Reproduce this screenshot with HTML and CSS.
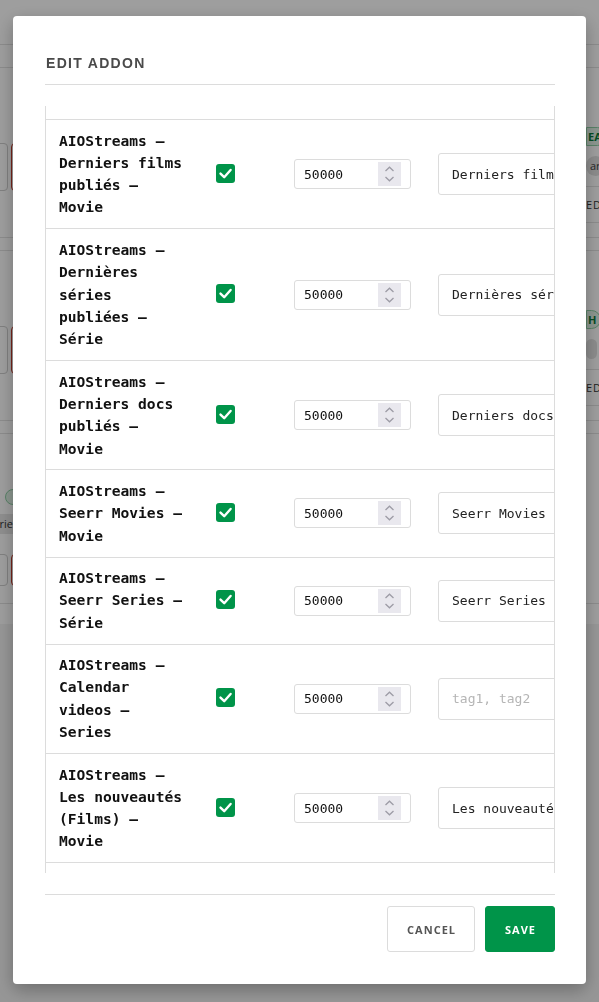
FILE: index.html
```html
<!DOCTYPE html>
<html lang="en">
<head>
    <meta charset="UTF-8">
    <meta name="viewport" content="width=device-width, initial-scale=1.0">
    <title>Edit Addon</title>
    <link rel="stylesheet" href="styles.css">
</head>
<body>
    <!-- Page underneath the dialog -->
    <div class="page">
        <div class="topbar"></div>
        <div class="subbar"></div>

        <section class="addon-card">
            <div class="card-actions">
                <span class="btn-ghost"></span>
                <span class="btn-danger"></span>
            </div>
            <div class="card-meta">
                <span class="badge">EA</span>
                <span class="pill">ar</span>
                <div class="meta-line">ED</div>
            </div>
        </section>

        <section class="addon-card">
            <div class="card-actions">
                <span class="btn-ghost"></span>
                <span class="btn-danger"></span>
            </div>
            <div class="card-meta">
                <span class="badge">H</span>
                <span class="pill">&nbsp;</span>
                <div class="meta-line">ED</div>
            </div>
        </section>

        <section class="addon-card short">
            <span class="dot"></span>
            <div class="tag-bar">rie</div>
            <div class="card-actions small">
                <span class="btn-ghost"></span>
                <span class="btn-danger"></span>
            </div>
        </section>

        <div class="page-rest"></div>
    </div>

    <!-- Edit addon dialog -->
    <div class="overlay">
        <div class="modal">
            <div class="modal-header">
                <h2>EDIT ADDON</h2>
            </div>

            <div class="catalog-scroll">
                <div class="catalog-list">
                    <div class="catalog-row">
                        <div class="cell-name">AIOStreams — Derniers films publiés — Movie</div>
                        <div class="cell-check"><span class="checkbox"><svg viewBox="0 0 19 19" width="19" height="19"><path d="M4.5 9.6 L8.2 13.2 L14.6 6" /></svg></span></div>
                        <div class="cell-num"><div class="number-input"><span>50000</span><span class="spin"><svg viewBox="0 0 23 24" width="23" height="24"><path d="M7.5 9 L11.5 5.2 L15.5 9 M7.5 15 L11.5 18.8 L15.5 15" /></svg></span></div></div>
                        <div class="cell-text"><input type="text" value="Derniers films publiés" placeholder="tag1, tag2"></div>
                    </div>
                    <div class="catalog-row">
                        <div class="cell-name">AIOStreams — Dernières séries publiées — Série</div>
                        <div class="cell-check"><span class="checkbox"><svg viewBox="0 0 19 19" width="19" height="19"><path d="M4.5 9.6 L8.2 13.2 L14.6 6" /></svg></span></div>
                        <div class="cell-num"><div class="number-input"><span>50000</span><span class="spin"><svg viewBox="0 0 23 24" width="23" height="24"><path d="M7.5 9 L11.5 5.2 L15.5 9 M7.5 15 L11.5 18.8 L15.5 15" /></svg></span></div></div>
                        <div class="cell-text"><input type="text" value="Dernières séries publiées" placeholder="tag1, tag2"></div>
                    </div>
                    <div class="catalog-row">
                        <div class="cell-name">AIOStreams — Derniers docs publiés — Movie</div>
                        <div class="cell-check"><span class="checkbox"><svg viewBox="0 0 19 19" width="19" height="19"><path d="M4.5 9.6 L8.2 13.2 L14.6 6" /></svg></span></div>
                        <div class="cell-num"><div class="number-input"><span>50000</span><span class="spin"><svg viewBox="0 0 23 24" width="23" height="24"><path d="M7.5 9 L11.5 5.2 L15.5 9 M7.5 15 L11.5 18.8 L15.5 15" /></svg></span></div></div>
                        <div class="cell-text"><input type="text" value="Derniers docs publiés" placeholder="tag1, tag2"></div>
                    </div>
                    <div class="catalog-row">
                        <div class="cell-name">AIOStreams — Seerr Movies — Movie</div>
                        <div class="cell-check"><span class="checkbox"><svg viewBox="0 0 19 19" width="19" height="19"><path d="M4.5 9.6 L8.2 13.2 L14.6 6" /></svg></span></div>
                        <div class="cell-num"><div class="number-input"><span>50000</span><span class="spin"><svg viewBox="0 0 23 24" width="23" height="24"><path d="M7.5 9 L11.5 5.2 L15.5 9 M7.5 15 L11.5 18.8 L15.5 15" /></svg></span></div></div>
                        <div class="cell-text"><input type="text" value="Seerr Movies" placeholder="tag1, tag2"></div>
                    </div>
                    <div class="catalog-row">
                        <div class="cell-name">AIOStreams — Seerr Series — Série</div>
                        <div class="cell-check"><span class="checkbox"><svg viewBox="0 0 19 19" width="19" height="19"><path d="M4.5 9.6 L8.2 13.2 L14.6 6" /></svg></span></div>
                        <div class="cell-num"><div class="number-input"><span>50000</span><span class="spin"><svg viewBox="0 0 23 24" width="23" height="24"><path d="M7.5 9 L11.5 5.2 L15.5 9 M7.5 15 L11.5 18.8 L15.5 15" /></svg></span></div></div>
                        <div class="cell-text"><input type="text" value="Seerr Series" placeholder="tag1, tag2"></div>
                    </div>
                    <div class="catalog-row">
                        <div class="cell-name">AIOStreams — Calendar videos — Series</div>
                        <div class="cell-check"><span class="checkbox"><svg viewBox="0 0 19 19" width="19" height="19"><path d="M4.5 9.6 L8.2 13.2 L14.6 6" /></svg></span></div>
                        <div class="cell-num"><div class="number-input"><span>50000</span><span class="spin"><svg viewBox="0 0 23 24" width="23" height="24"><path d="M7.5 9 L11.5 5.2 L15.5 9 M7.5 15 L11.5 18.8 L15.5 15" /></svg></span></div></div>
                        <div class="cell-text"><input type="text" value="" placeholder="tag1, tag2"></div>
                    </div>
                    <div class="catalog-row">
                        <div class="cell-name">AIOStreams — Les nouveautés (Films) — Movie</div>
                        <div class="cell-check"><span class="checkbox"><svg viewBox="0 0 19 19" width="19" height="19"><path d="M4.5 9.6 L8.2 13.2 L14.6 6" /></svg></span></div>
                        <div class="cell-num"><div class="number-input"><span>50000</span><span class="spin"><svg viewBox="0 0 23 24" width="23" height="24"><path d="M7.5 9 L11.5 5.2 L15.5 9 M7.5 15 L11.5 18.8 L15.5 15" /></svg></span></div></div>
                        <div class="cell-text"><input type="text" value="Les nouveautés (Films)" placeholder="tag1, tag2"></div>
                    </div>
                    <div class="catalog-row">
                        <div class="cell-name">AIOStreams — Les nouveautés (Séries) — Series</div>
                        <div class="cell-check"><span class="checkbox"><svg viewBox="0 0 19 19" width="19" height="19"><path d="M4.5 9.6 L8.2 13.2 L14.6 6" /></svg></span></div>
                        <div class="cell-num"><div class="number-input"><span>50000</span><span class="spin"><svg viewBox="0 0 23 24" width="23" height="24"><path d="M7.5 9 L11.5 5.2 L15.5 9 M7.5 15 L11.5 18.8 L15.5 15" /></svg></span></div></div>
                        <div class="cell-text"><input type="text" value="Les nouveautés (Séries)" placeholder="tag1, tag2"></div>
                    </div>
                </div>
            </div>

            <div class="modal-footer">
                <button class="btn-cancel">CANCEL</button>
                <button class="btn-save">SAVE</button>
            </div>
        </div>
    </div>
</body>
</html>
```

FILE: styles.css
```css
body {
    margin: 0;
    height: 1002px;
    overflow: hidden;
    font-family: "Open Sans", Arial, sans-serif;
    background-color: #fff;
}

/* ---------- page behind the dialog ---------- */

.page {
    width: 599px;
    background-color: #fff;
}

.topbar {
    height: 44px;
    border-bottom: 1px solid #e2e2e2;
}

.subbar {
    height: 22px;
    border-bottom: 1px solid #e2e2e2;
}

.addon-card {
    display: flex;
    justify-content: space-between;
    height: 169px;
    border-top: 1px solid #e2e2e2;
    border-bottom: 1px solid #e2e2e2;
    margin-bottom: 12px;
}

.addon-card:first-of-type {
    border-top: none;
}

.card-actions {
    display: flex;
    gap: 3px;
    align-self: flex-end;
    margin-left: -30px;
    padding-bottom: 46px;
}

.btn-ghost,
.btn-danger {
    width: 38px;
    height: 48px;
    border-radius: 4px;
    border: 1px solid #cfcfcf;
    box-sizing: border-box;
}

.btn-danger {
    border-color: #c0392b;
}

.card-meta {
    width: 13px;
    overflow: hidden;
    display: flex;
    flex-direction: column;
    align-items: flex-start;
    align-self: flex-end;
    gap: 10px;
    padding-bottom: 14px;
    white-space: nowrap;
}

.badge {
    font-size: 11px;
    line-height: 15px;
    font-weight: 700;
    color: #0a7a3a;
    background-color: #e2f4e8;
    border: 1px solid #8fd1a6;
    border-radius: 0 10px 10px 0;
    padding: 1px 4px 1px 1px;
}

.pill {
    font-size: 11px;
    line-height: 14px;
    color: #444;
    background-color: #e2e2e2;
    border-radius: 10px;
    padding: 3px 4px;
}

.meta-line {
    align-self: stretch;
    border-top: 1px solid #e2e2e2;
    border-bottom: 1px solid #e2e2e2;
    padding: 10px 0;
    font-size: 11px;
    line-height: 15px;
    letter-spacing: 1px;
    color: #333;
}

.addon-card.short {
    display: block;
    box-sizing: border-box;
    height: 171px;
    padding-top: 55px;
    margin-bottom: 20px;
}

.dot {
    display: block;
    width: 16px;
    height: 16px;
    border-radius: 50%;
    background-color: #e2f4e8;
    border: 1px solid #8fd1a6;
    box-sizing: border-box;
    margin-left: 5px;
}

.tag-bar {
    width: 13px;
    overflow: hidden;
    direction: rtl;
    margin-top: 9px;
    font-size: 11px;
    line-height: 20px;
    color: #333;
    background-color: #e6e6e6;
}

.card-actions.small {
    align-self: auto;
    margin-top: 20px;
    padding-bottom: 0;
}

.card-actions.small span {
    height: 32px;
}

.page-rest {
    height: 400px;
    background-color: #f3f3f3;
}

/* ---------- dialog ---------- */

.overlay {
    position: fixed;
    top: 0;
    left: 0;
    right: 0;
    bottom: 0;
    background-color: rgba(0, 0, 0, 0.38);
    display: flex;
    justify-content: center;
    align-items: flex-start;
    padding-top: 16px;
}

.modal {
    width: 573px;
    box-sizing: border-box;
    background-color: #fff;
    border-radius: 4px;
    padding: 32px 31px 32px 32px;
    box-shadow: 0 6px 18px rgba(0, 0, 0, 0.28);
}

.modal-header {
    padding: 5px 0 11px;
    border-bottom: 1px solid #dcdcdc;
}

.modal-header h2 {
    margin: 0 0 0 1px;
    font-family: "Liberation Sans", Arial, sans-serif;
    font-size: 14px;
    line-height: 20px;
    font-weight: 700;
    letter-spacing: 1.3px;
    color: #4a4a4a;
}

.catalog-scroll {
    margin-top: 21px;
    height: 767px;
    overflow: hidden;
    border-left: 1px solid #dcdcdc;
    border-right: 1px solid #dcdcdc;
    padding-top: 13px;
    box-sizing: border-box;
}

.catalog-list {
    width: 613px;
    border-top: 1px solid #dcdcdc;
}

.catalog-row {
    display: grid;
    grid-template-columns: 157px 78px 144px 220px;
    align-items: center;
    padding: 9.6px 0 9.6px 13px;
    border-bottom: 1px solid #dcdcdc;
}

.cell-name {
    padding-right: 29px;
    font-family: "DejaVu Sans Mono", monospace;
    font-weight: 700;
    font-size: 14.6px;
    line-height: 22.3px;
    color: #111;
}

.checkbox {
    display: block;
    width: 19px;
    height: 19px;
    margin-top: -2px;
    border-radius: 3px;
    background-color: #009449;
}

.checkbox svg {
    display: block;
    fill: none;
    stroke: #fff;
    stroke-width: 2.4;
    stroke-linecap: round;
    stroke-linejoin: round;
}

.number-input {
    width: 117px;
    height: 30px;
    box-sizing: border-box;
    border: 1px solid #dcdcdc;
    border-radius: 3px;
    display: flex;
    align-items: center;
    justify-content: space-between;
    padding: 0 9px 0 9px;
    font-family: "DejaVu Sans Mono", monospace;
    font-size: 13px;
    color: #111;
}

.spin {
    width: 23px;
    height: 24px;
    background-color: #e9e8ee;
}

.spin svg {
    display: block;
    fill: none;
    stroke: #9d9ca6;
    stroke-width: 1.3;
}

.cell-text input {
    width: 220px;
    height: 42px;
    box-sizing: border-box;
    border: 1px solid #dcdcdc;
    border-radius: 3px;
    padding: 0 13px;
    font-family: "DejaVu Sans Mono", monospace;
    font-size: 13px;
    color: #222;
    outline: none;
}

.cell-text input::placeholder {
    color: #b5b5b5;
}

.modal-footer {
    margin-top: 21px;
    border-top: 1px solid #dcdcdc;
    padding-top: 11px;
    display: flex;
    justify-content: flex-end;
    gap: 10px;
}

.modal-footer button {
    height: 46px;
    padding: 0 18px 0 19px;
    font-family: "Open Sans", Arial, sans-serif;
    font-size: 11px;
    font-weight: 700;
    letter-spacing: 1px;
    border-radius: 3px;
    cursor: pointer;
}

.btn-cancel {
    background-color: #fff;
    color: #555;
    border: 1px solid #dcdcdc;
}

.btn-save {
    background-color: #009449;
    color: #fff;
    border: 1px solid #009449;
}
```
